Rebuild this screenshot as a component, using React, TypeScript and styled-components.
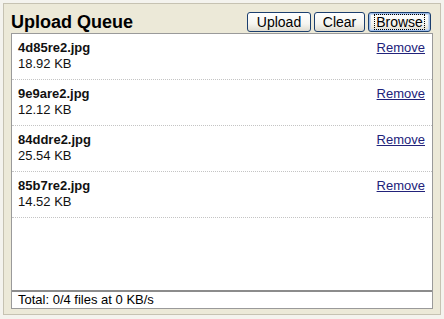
import React from 'react'
import styled, { createGlobalStyle } from 'styled-components'

const GlobalStyle = createGlobalStyle`
  html, body {
    margin: 0;
    padding: 0;
    background: #f4f3ee;
    font-family: 'Liberation Sans', Arial, sans-serif;
  }
`

const Page = styled.div`
  padding: 3px;
`

const Panel = styled.div`
  box-sizing: border-box;
  width: 438px;
  height: 312px;
  border: 1px solid #c6c2b2;
  background: #ece9d8;
  padding: 0 7px 5px 7px;
  display: flex;
  flex-direction: column;
`

const Header = styled.div`
  height: 29px;
  display: flex;
  align-items: flex-end;
  justify-content: space-between;
  flex-shrink: 0;
`

const Title = styled.h2`
  margin: 0;
  font-size: 18px;
  line-height: 21px;
  font-weight: bold;
  color: #000;
`

const Buttons = styled.div`
  display: flex;
  gap: 3px;
  margin: 0 2px 1px 0;
`

const Button = styled.button<{ $w: number; $focused?: boolean }>`
  box-sizing: border-box;
  width: ${p => p.$w}px;
  height: 20px;
  padding: 0;
  border: 1px solid #1c3f6e;
  border-radius: 3px;
  background: linear-gradient(#ffffff 0%, #f6f5f0 60%, #dedbcf 100%);
  font-family: 'Liberation Sans', Arial, sans-serif;
  font-size: 14px;
  line-height: 16px;
  color: #000;
  display: flex;
  align-items: center;
  justify-content: center;
  box-shadow: ${p => (p.$focused ? 'inset 0 0 0 1px #9fbde8, inset 0 0 0 2px #c8daf3' : 'none')};
`

const FocusRing = styled.span`
  border: 1px dotted #000;
  padding: 0 1px;
  line-height: 14px;
`

const Queue = styled.div`
  flex: 1;
  display: flex;
  flex-direction: column;
  background: #fff;
  border: 1px solid #9a9a9a;
  border-bottom: none;
`

const Files = styled.div`
  flex: 1;
`

const FileRow = styled.div`
  display: flex;
  justify-content: space-between;
  align-items: flex-start;
  padding: 6px 7px 7px 6px;
  border-bottom: 1px dotted #c4c4c4;
`

const FileInfo = styled.div`
  display: flex;
  flex-direction: column;
`

const FileName = styled.span`
  font-size: 13px;
  line-height: 16px;
  font-weight: bold;
  color: #111;
`

const FileSize = styled.span`
  font-size: 13px;
  line-height: 16px;
  color: #111;
`

const RemoveLink = styled.a`
  font-size: 13px;
  line-height: 16px;
  color: #22227a;
  text-decoration: underline;
  cursor: pointer;
`

const StatusBar = styled.div`
  height: 16px;
  border-top: 2px solid #8c8c8c;
  border-bottom: 1px solid #9a9a9a;
  padding-left: 6px;
  font-size: 13px;
  line-height: 16px;
  color: #000;
`

const files = [
  { name: '4d85re2.jpg', size: '18.92 KB' },
  { name: '9e9are2.jpg', size: '12.12 KB' },
  { name: '84ddre2.jpg', size: '25.54 KB' },
  { name: '85b7re2.jpg', size: '14.52 KB' },
]

const App: React.FC = () => {
  return (
    <Page>
      <GlobalStyle />
      <Panel>
        <Header>
          <Title>Upload Queue</Title>
          <Buttons>
            <Button $w={64}>Upload</Button>
            <Button $w={51}>Clear</Button>
            <Button $w={63} $focused>
              <FocusRing>Browse</FocusRing>
            </Button>
          </Buttons>
        </Header>
        <Queue>
          <Files>
            {files.map(f => (
              <FileRow key={f.name}>
                <FileInfo>
                  <FileName>{f.name}</FileName>
                  <FileSize>{f.size}</FileSize>
                </FileInfo>
                <RemoveLink>Remove</RemoveLink>
              </FileRow>
            ))}
          </Files>
          <StatusBar>Total: 0/4 files at 0 KB/s</StatusBar>
        </Queue>
      </Panel>
    </Page>
  )
}

export default App
